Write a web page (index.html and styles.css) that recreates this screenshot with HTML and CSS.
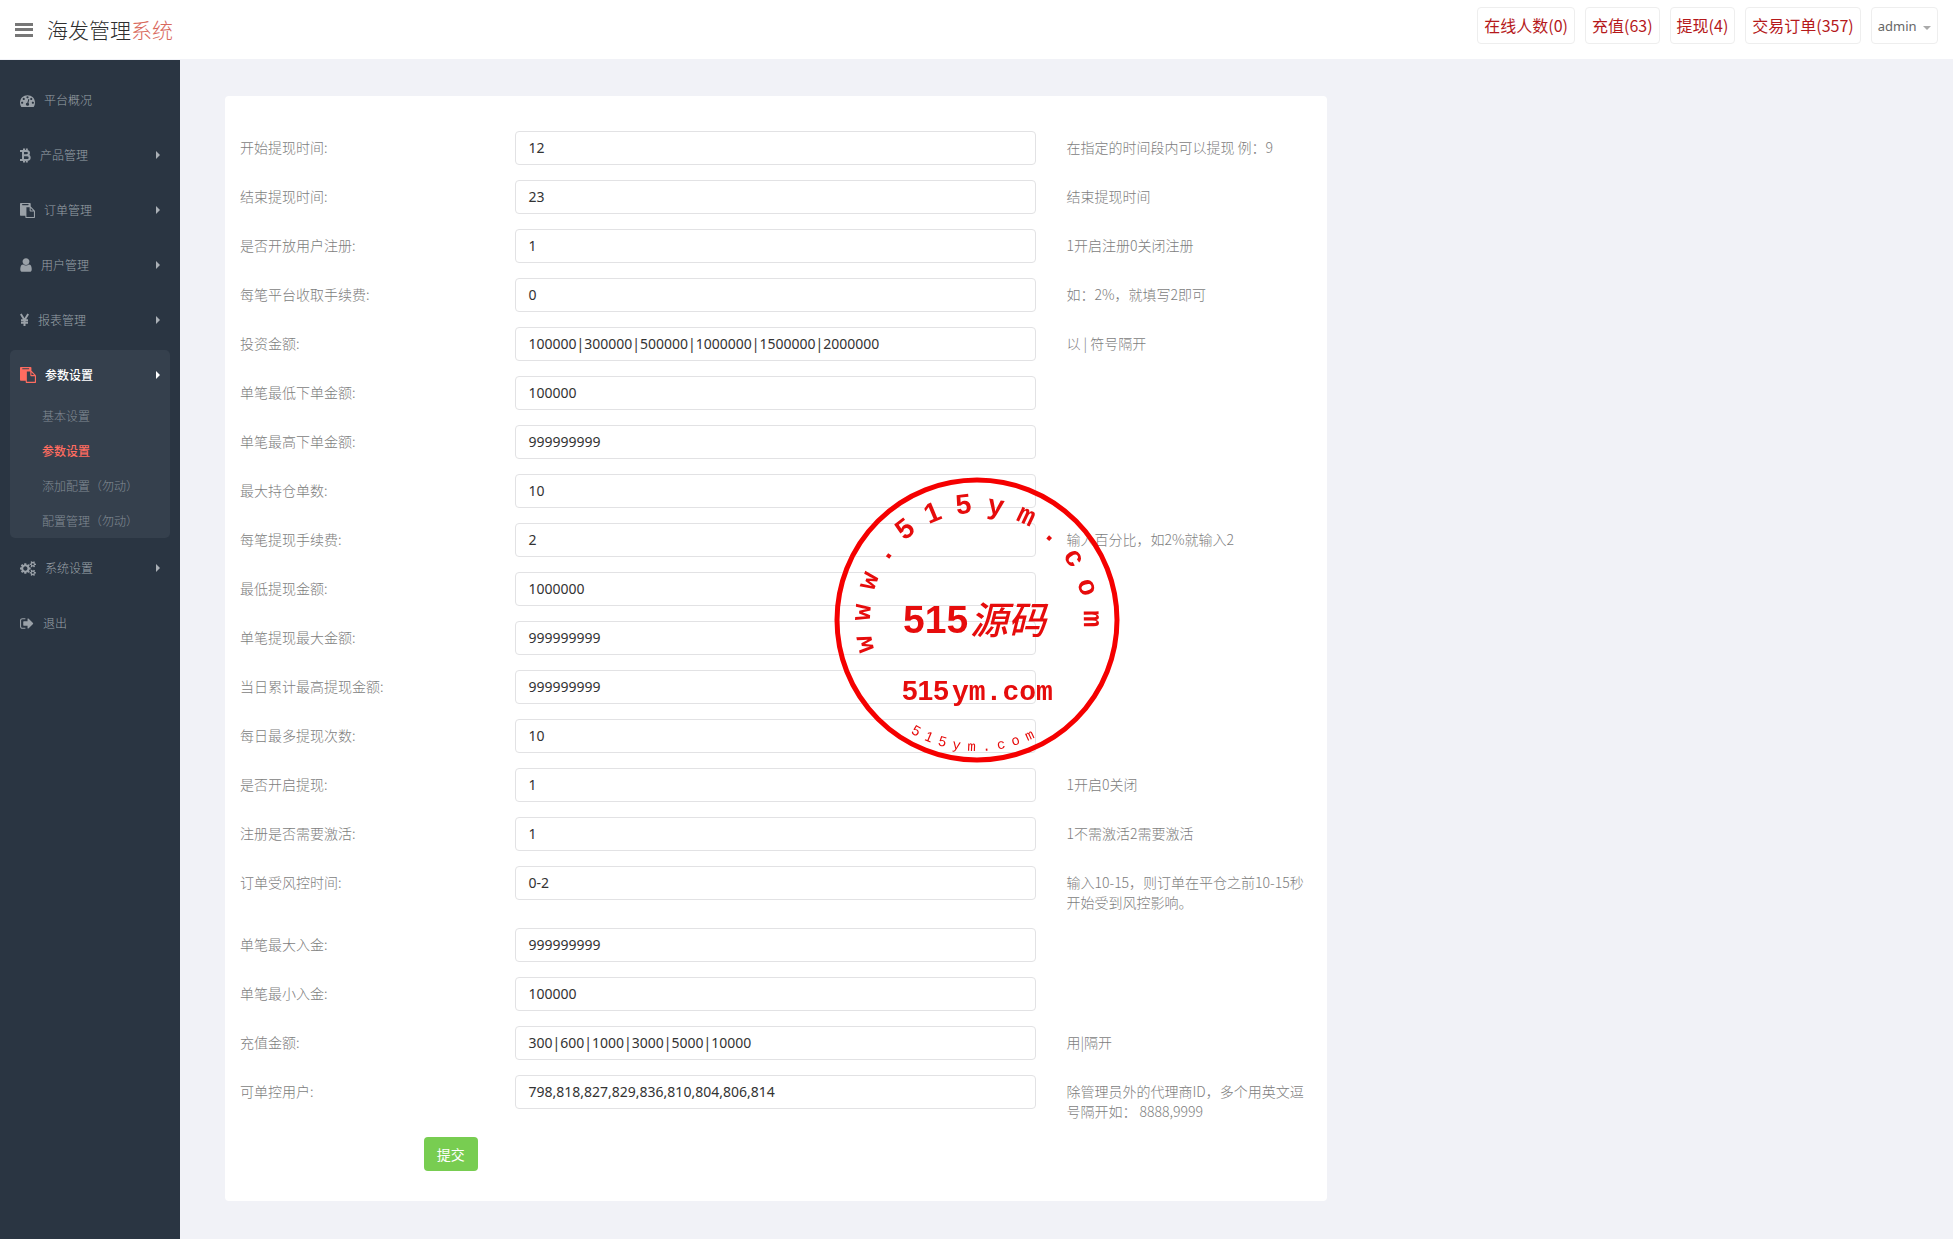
FILE: index.html
```
<!DOCTYPE html>
<html lang="zh-CN">
<head>
  <meta charset="UTF-8">
  <title>海发管理系统</title>
  <link rel="stylesheet" href="styles.css">
</head>
<body>

<svg class="sprite" aria-hidden="true">
  <symbol id="i-paste" viewBox="0 0 1792 1792"><path d="M768 1664h896v-640h-416q-40 0-68-28t-28-68v-416h-384v1152zm256-1440v-64q0-13-9.5-22.5t-22.5-9.5h-704q-13 0-22.5 9.5t-9.5 22.5v64q0 13 9.5 22.5t22.5 9.5h704q13 0 22.5-9.5t9.5-22.5zm256 672h299l-299-299v299zm512 128v672q0 40-28 68t-68 28h-960q-40 0-68-28t-28-68v-160h-544q-40 0-68-28t-28-68v-1344q0-40 28-68t68-28h1088q40 0 68 28t28 68v328q21 13 36 28l408 408q28 28 48 76t20 88z"/></symbol>
</svg>

<header class="header">
  <button type="button" class="toggle" aria-label="菜单">
    <svg width="18" height="14" viewBox="0 0 18 14"><path d="M0 0h18v3H0zM0 5h18v3H0zM0 11h18v3H0z"/></svg>
  </button>
  <a href="#" class="logo">海发管理<span>系统</span></a>
  <nav class="top-nav">
    <a href="#">在线人数(0)</a>
    <a href="#">充值(63)</a>
    <a href="#">提现(4)</a>
    <a href="#">交易订单(357)</a>
    <a href="#" class="user">admin <b class="caret"></b></a>
  </nav>
</header>

<div class="container">
  <aside class="sidebar">
    <ul class="menu">
      <li><a href="#"><svg width="15" height="15" viewBox="0 0 1792 1792"><path d="M384 1152q0-53-37.5-90.5t-90.5-37.5-90.5 37.5-37.5 90.5 37.5 90.5 90.5 37.5 90.5-37.5 37.5-90.5zm192-448q0-53-37.5-90.5t-90.5-37.5-90.5 37.5-37.5 90.5 37.5 90.5 90.5 37.5 90.5-37.5 37.5-90.5zm428 481l101-382q6-26-7.5-48.5t-38.5-29.5-48 6.5-30 39.5l-101 382q-60 5-107 43.5t-63 98.5q-20 77 20 146t117 89 146-20 89-117q16-60-6-117t-72-91zm660-33q0-53-37.5-90.5t-90.5-37.5-90.5 37.5-37.5 90.5 37.5 90.5 90.5 37.5 90.5-37.5 37.5-90.5zm-640-640q0-53-37.5-90.5t-90.5-37.5-90.5 37.5-37.5 90.5 37.5 90.5 90.5 37.5 90.5-37.5 37.5-90.5zm448 192q0-53-37.5-90.5t-90.5-37.5-90.5 37.5-37.5 90.5 37.5 90.5 90.5 37.5 90.5-37.5 37.5-90.5zm320 448q0 261-141 483-19 29-54 29h-1402q-35 0-54-29-141-221-141-483 0-182 71-348t191-286 286-191 348-71 348 71 286 191 191 286 71 348z"/></svg>平台概况</a></li>
      <li class="more"><a href="#"><svg class="line" width="11" height="15" viewBox="0 0 11 15"><path d="M0 3h6.5q2.500 0 2.500 2.100t-2.500 2.200H3M6.500 7.300q3.200 0 3.200 2.400T6.500 12H0M3 3v9M4 .5V3M6.800.5V3M4 12v2.500M6.800 12v2.500"/></svg>产品管理</a></li>
      <li class="more"><a href="#"><svg width="15" height="15"><use href="#i-paste"/></svg>订单管理</a></li>
      <li class="more"><a href="#"><svg width="12" height="16" viewBox="256 0 1280 1792"><path d="M1536 1399q0 109-62.5 187t-150.5 78h-854q-88 0-150.5-78t-62.5-187q0-85 8.5-160.5t31.5-152 58.5-131 94-89 134.5-34.5q131 128 313 128t313-128q76 0 134.5 34.5t94 89 58.5 131 31.5 152 8.5 160.5zm-256-887q0 159-112.5 271.5t-271.5 112.500-271.5-112.500-112.500-271.5 112.500-271.5 271.5-112.500 271.5 112.500 112.500 271.5z"/></svg>用户管理</a></li>
      <li class="more"><a href="#"><svg class="line" width="9" height="14" viewBox="0 0 9 14"><path d="M.8 1l3.700 6L8.200 1M4.500 7v6M1 7.300h7M1 9.700h7"/></svg>报表管理</a></li>
      <li class="more active">
        <a href="#"><svg width="16" height="16"><use href="#i-paste"/></svg>参数设置</a>
        <ul class="sub">
          <li><a href="#">基本设置</a></li>
          <li class="current"><a href="#">参数设置</a></li>
          <li><a href="#">添加配置（勿动）</a></li>
          <li><a href="#">配置管理（勿动）</a></li>
        </ul>
      </li>
      <li class="more"><a href="#"><svg width="16" height="15" viewBox="0 0 1920 1792"><path d="M896 896q0-106-75-181t-181-75-181 75-75 181 75 181 181 75 181-75 75-181zm768 512q0-52-38-90t-90-38-90 38-38 90q0 53 37.5 90.5t90.5 37.5 90.5-37.5 37.5-90.5zm0-1024q0-52-38-90t-90-38-90 38-38 90q0 53 37.5 90.5t90.5 37.5 90.5-37.5 37.5-90.5zm-384 421v185q0 10-7 19.5t-16 10.5l-155 24q-11 35-32 76 34 48 90 115 7 10 7 20 0 12-7 19-23 30-82.5 89.5t-78.5 59.5q-11 0-21-7l-115-90q-37 19-77 31-11 108-23 155-7 24-30 24h-186q-11 0-20-7.5t-10-17.5l-23-153q-34-10-75-31l-118 89q-7 7-20 7-11 0-21-8-144-133-144-160 0-9 7-19 10-14 41-53t47-61q-23-44-35-82l-152-24q-10-1-17-9.5t-7-19.5v-185q0-10 7-19.5t16-10.5l155-24q11-35 32-76-34-48-90-115-7-11-7-20 0-12 7-20 22-30 82-89t79-59q11 0 21 7l115 90q34-18 77-32 11-108 23-154 7-24 30-24h186q11 0 20 7.5t10 17.5l23 153q34 10 75 31l118-89q8-7 20-7 11 0 21 8 144 133 144 160 0 9-7 19-12 16-42 54t-45 60q23 48 34 82l152 23q10 2 17 10.5t7 19.5zm640 533v140q0 16-149 31-12 27-30 52 51 113 51 138 0 4-4 7-122 71-124 71-8 0-46-47t-52-68q-20 2-30 2t-30-2q-14 21-52 68t-46 47q-2 0-124-71-4-3-4-7 0-25 51-138-18-25-30-52-149-15-149-31v-140q0-16 149-31 13-29 30-52-51-113-51-138 0-4 4-7 4-2 35-20t59-34 30-16q8 0 46 46.5t52 67.5q20-2 30-2t30 2q51-71 92-112l6-2q4 0 124 70 4 3 4 7 0 25-51 138 17 23 30 52 149 15 149 31zm0-1024v140q0 16-149 31-12 27-30 52 51 113 51 138 0 4-4 7-122 71-124 71-8 0-46-47t-52-68q-20 2-30 2t-30-2q-14 21-52 68t-46 47q-2 0-124-71-4-3-4-7 0-25 51-138-18-25-30-52-149-15-149-31v-140q0-16 149-31 13-29 30-52-51-113-51-138 0-4 4-7 4-2 35-20t59-34 30-16q8 0 46 46.5t52 67.5q20-2 30-2t30 2q51-71 92-112l6-2q4 0 124 70 4 3 4 7 0 25-51 138 17 23 30 52 149 15 149 31z"/></svg>系统设置</a></li>
      <li><a href="#"><svg width="14" height="15" viewBox="64 0 1664 1792"><path d="M704 1440q0 4 1 20t.5 26.5-3 23.500-10 19.500-20.500 6.500h-320q-119 0-203.500-84.500t-84.500-203.500v-704q0-119 84.500-203.500t203.500-84.500h320q13 0 22.500 9.500t9.500 22.500q0 4 1 20t.5 26.5-3 23.500-10 19.500-20.500 6.500h-320q-66 0-113 47t-47 113v704q0 66 47 113t113 47h312l11.5 1 11.5 3 8 5.5 7 9 2 13.500zm928-544q0 26-19 45l-544 544q-19 19-45 19t-45-19-19-45v-288h-448q-26 0-45-19t-19-45v-384q0-26 19-45t45-19h448v-288q0-26 19-45t45-19 45 19l544 544q19 19 19 45z"/></svg>退出</a></li>
    </ul>
  </aside>

  <main class="main">
    <section class="panel">
      <form>
        <div class="row"><label for="f1">开始提现时间:</label><input type="text" id="f1" value="12"><p>在指定的时间段内可以提现 例：9</p></div>
        <div class="row"><label for="f2">结束提现时间:</label><input type="text" id="f2" value="23"><p>结束提现时间</p></div>
        <div class="row"><label for="f3">是否开放用户注册:</label><input type="text" id="f3" value="1"><p>1开启注册0关闭注册</p></div>
        <div class="row"><label for="f4">每笔平台收取手续费:</label><input type="text" id="f4" value="0"><p>如：2%，就填写2即可</p></div>
        <div class="row"><label for="f5">投资金额:</label><input type="text" id="f5" value="100000|300000|500000|1000000|1500000|2000000"><p>以 | 符号隔开</p></div>
        <div class="row"><label for="f6">单笔最低下单金额:</label><input type="text" id="f6" value="100000"></div>
        <div class="row"><label for="f7">单笔最高下单金额:</label><input type="text" id="f7" value="999999999"></div>
        <div class="row"><label for="f8">最大持仓单数:</label><input type="text" id="f8" value="10"></div>
        <div class="row"><label for="f9">每笔提现手续费:</label><input type="text" id="f9" value="2"><p>输入百分比，如2%就输入2</p></div>
        <div class="row"><label for="f10">最低提现金额:</label><input type="text" id="f10" value="1000000"></div>
        <div class="row"><label for="f11">单笔提现最大金额:</label><input type="text" id="f11" value="999999999"></div>
        <div class="row"><label for="f12">当日累计最高提现金额:</label><input type="text" id="f12" value="999999999"></div>
        <div class="row"><label for="f13">每日最多提现次数:</label><input type="text" id="f13" value="10"></div>
        <div class="row"><label for="f14">是否开启提现:</label><input type="text" id="f14" value="1"><p>1开启0关闭</p></div>
        <div class="row"><label for="f15">注册是否需要激活:</label><input type="text" id="f15" value="1"><p>1不需激活2需要激活</p></div>
        <div class="row"><label for="f16">订单受风控时间:</label><input type="text" id="f16" value="0-2"><p>输入10-15，则订单在平仓之前10-15秒开始受到风控影响。</p></div>
        <div class="row"><label for="f17">单笔最大入金:</label><input type="text" id="f17" value="999999999"></div>
        <div class="row"><label for="f18">单笔最小入金:</label><input type="text" id="f18" value="100000"></div>
        <div class="row"><label for="f19">充值金额:</label><input type="text" id="f19" value="300|600|1000|3000|5000|10000"><p>用|隔开</p></div>
        <div class="row"><label for="f20">可单控用户:</label><input type="text" id="f20" value="798,818,827,829,836,810,804,806,814"><p>除管理员外的代理商ID，多个用英文逗号隔开如： 8888,9999</p></div>
        <div class="actions"><button type="submit" class="btn">提交</button></div>
      </form>
    </section>
  </main>
</div>

<svg class="stamp" width="286" height="286" viewBox="0 0 286 286">
  <defs>
    <path id="arc-top" d="M143 250A107 107 0 0 1 143 36A107 107 0 0 1 143 250"/>
    <path id="arc-bottom" d="M12 143A131 131 0 0 0 274 143"/>
  </defs>
  <circle cx="143" cy="143" r="140"/>
  <text class="stamp-url"><textPath href="#arc-top" startOffset="137"><tspan dx="0 13 13 13">www.</tspan><tspan class="digits" dx="13 14 14">515</tspan><tspan dx="14 13 13 13 13 13">ym.com</tspan></textPath></text>
  <text class="stamp-num" x="69" y="156">515</text>
  <text class="stamp-name" x="136" y="157">源码</text>
  <text class="stamp-url" y="223"><tspan class="digits" x="68">515</tspan><tspan x="118">ym.com</tspan></text>
  <text class="stamp-small"><textPath href="#arc-bottom" startOffset="136"><tspan class="digits" dx="0 7 7">515</tspan><tspan dx="7 7 7 7 7 7">ym.com</tspan></textPath></text>
</svg>

</body>
</html>
```
FILE: styles.css
```
* {
  box-sizing: border-box;
}
body {
  margin: 0;
  background: #f1f2f7;
  color: #7d7d7d;
  font-family: "Noto Sans CJK SC", sans-serif;
  font-size: 14px;
  font-weight: 300;
  line-height: 20px;
}
a {
  color: inherit;
  text-decoration: none;
}
ul {
  list-style: none;
  margin: 0;
  padding: 0;
}
svg {
  fill: currentColor;
}
.sprite {
  display: none;
}

/* header */
.header {
  display: flex;
  height: 60px;
  padding: 0 15px;
  background: #fff;
  border-bottom: 1px solid #f1f2f7;
}
.toggle {
  align-self: center;
  display: flex;
  margin: 0 14px 0 0;
  padding: 0;
  border: 0;
  background: none;
  color: #777;
}
.logo {
  color: #2e2e2e;
  font-size: 21px;
  line-height: 58px;
}
.logo span {
  color: #d9695c;
}
.top-nav {
  display: flex;
  gap: 10px;
  height: 37px;
  margin: 7px 0 0 auto;
}
.top-nav a {
  padding: 0 6px;
  border: 1px solid #eee;
  border-radius: 4px;
  color: #b5191b;
  font-size: 16px;
  font-weight: 400;
  line-height: 35px;
}
.top-nav .user {
  color: #666;
  font-family: "Noto Sans", sans-serif;
  font-size: 13px;
  line-height: 37px;
}
.caret {
  display: inline-block;
  margin-left: 3px;
  border: 4px solid transparent;
  border-top-color: #aaa;
  border-bottom: 0;
  vertical-align: middle;
}

/* sidebar */
.container {
  display: flex;
  min-height: calc(100vh - 60px);
}
.sidebar {
  flex: 0 0 180px;
  padding: 15px 10px;
  background: #2a3542;
  color: #9aa1a8;
  font-size: 12px;
}
.menu > li {
  margin-bottom: 5px;
  border-radius: 5px;
}
.menu > li > a {
  display: flex;
  align-items: center;
  gap: 9px;
  height: 50px;
  padding: 0 10px;
}
.more > a::after {
  content: "";
  margin-left: auto;
  border: 4px solid transparent;
  border-left-color: #aab0b6;
  border-right: 0;
}
.line path {
  fill: none;
  stroke: currentColor;
  stroke-width: 2;
}
.active {
  background: #35404d;
}
.active > a {
  color: #fff;
  font-weight: 500;
}
.active > a svg {
  color: #ff6c60;
}
.active > a::after {
  border-left-color: #fff;
}
.sub {
  margin-top: -2px;
  color: #838c95;
}
.sub a {
  display: block;
  padding-left: 32px;
  line-height: 35px;
}
.current {
  color: #ff6c60;
  font-weight: 500;
}

/* form */
.main {
  flex: 1;
  padding: 36px 45px 38px 30px;
}
.panel {
  width: calc(100% * 2 / 3 - 30px);
  margin-left: 15px;
  padding: 35px 0 30px;
  background: #fff;
  border-radius: 4px;
}
.row {
  display: grid;
  grid-template-columns: 3fr 6fr 3fr;
  align-items: start;
  margin-bottom: 15px;
}
.row label,
.row p {
  margin: 0;
  padding: 6px 15px 1px;
}
.row input {
  height: 34px;
  margin: 0 15px;
  padding: 5px 12px 6px;
  border: 1px solid #e2e2e4;
  border-radius: 4px;
  background: #fff;
  color: #333;
  font-family: "Noto Sans", sans-serif;
  font-size: 14px;
}
.actions {
  padding-left: calc(100% / 6 + 15px);
}
.btn {
  display: block;
  height: 34px;
  padding: 0 13px 1px;
  border: 0;
  border-radius: 4px;
  background: #78cd51;
  color: #fff;
  font-family: inherit;
  font-size: 14px;
}

/* round stamp over the middle of the window */
.stamp {
  position: fixed;
  inset: 0;
  margin: auto;
  fill: #e60c0c;
  font-family: "Liberation Mono", monospace;
  font-weight: 700;
  pointer-events: none;
}
.stamp circle {
  fill: none;
  stroke: #f50000;
  stroke-width: 5;
}
.stamp-url {
  font-size: 28px;
}
.stamp-num,
.digits {
  font-family: "Liberation Sans", sans-serif;
}
.stamp-num {
  font-size: 39px;
}
.stamp-name {
  font-family: "Noto Sans CJK SC", sans-serif;
  font-size: 38px;
  font-style: italic;
  font-weight: 500;
}
.stamp-small {
  font-size: 14px;
  font-weight: 400;
}
```
